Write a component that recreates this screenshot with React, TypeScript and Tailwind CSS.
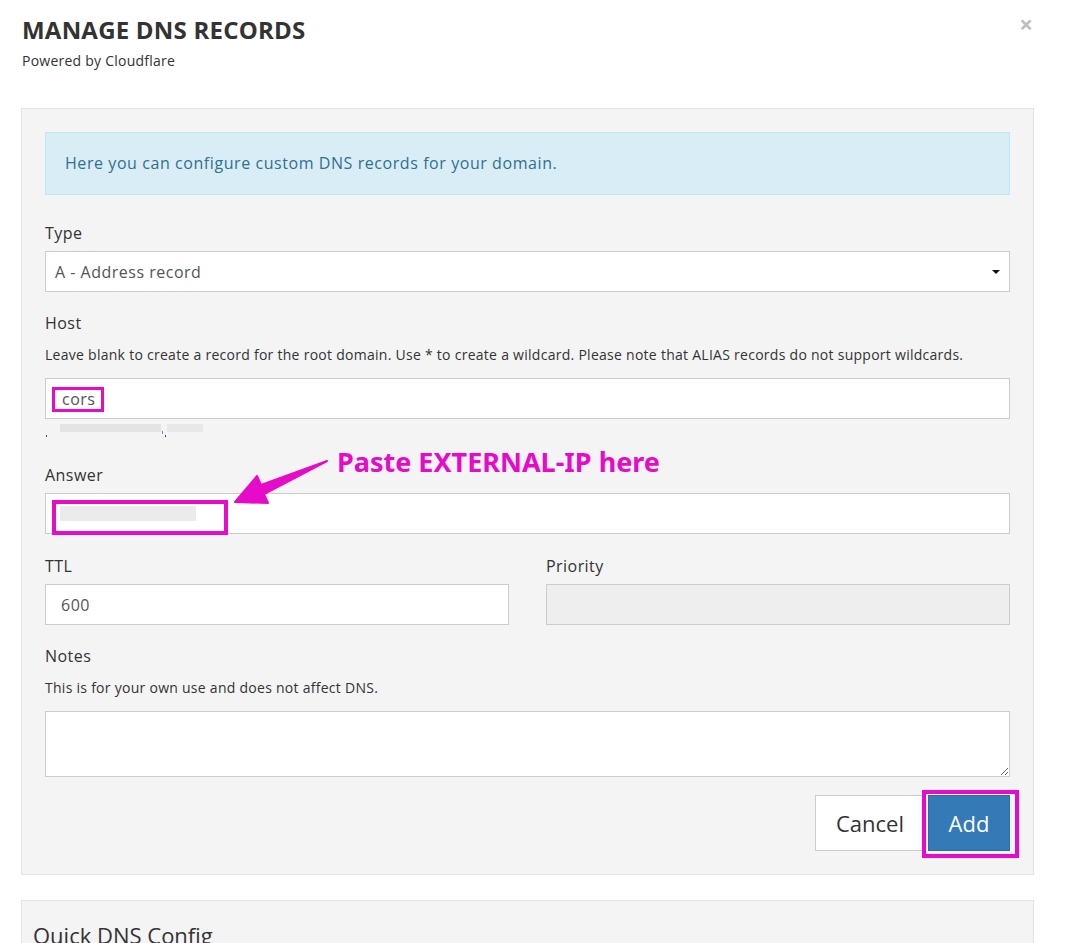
import React from "react";

const MAG = "#e50bc8";

function Label({ children, className = "" }: { children: React.ReactNode; className?: string }) {
  return <div className={`text-[16px] leading-[23px] tracking-[0.45px] text-[#333] ${className}`}>{children}</div>;
}

export default function App() {
  return (
    <div className="relative w-[1070px] h-[943px] overflow-hidden bg-white font-['Open_Sans',sans-serif] text-[#333] pl-[21px] pr-[36px]">
      {/* Header */}
      <div className="flex items-start justify-between pt-[17px]">
        <div className="pl-px">
          <h1 className="text-[24px] leading-[26px] font-bold tracking-[0.22px] text-[#333]">MANAGE DNS RECORDS</h1>
          <div className="mt-[8px] text-[14px] leading-[20px] tracking-[0.24px] text-[#333]">Powered by Cloudflare</div>
        </div>
        <div className="mt-[-5px] mr-px text-[24px] leading-[24px] font-bold text-[#bdbdbd]">×</div>
      </div>

      {/* Main panel */}
      <div className="mt-[37px] border border-[#e3e3e3] bg-[#f4f4f4] px-[23px] pt-[23px] pb-[23px]">
        <div className="border border-[#bce8f1] bg-[#d9edf7] text-[#31708f] text-[16px] leading-[23px] tracking-[0.57px] py-[19px] px-[19px]">
          Here you can configure custom DNS records for your domain.
        </div>

        <Label className="mt-[27px]">Type</Label>
        <div className="mt-[6px] h-[41px] border border-[#ccc] bg-white flex items-center justify-between pl-[9px] pr-[9px] text-[16px] tracking-[0.5px] text-[#555]">
          <span>A - Address record</span>
          <span className="w-0 h-0 border-l-[4px] border-r-[4px] border-t-[4px] border-l-transparent border-r-transparent border-t-[#111]" />
        </div>

        <Label className="mt-[20px]">Host</Label>
        <div className="mt-[10px] text-[14px] leading-[20px] tracking-[0.27px] text-[#333]">
          Leave blank to create a record for the root domain. Use * to create a wildcard. Please note that ALIAS records do not support wildcards.
        </div>
        <div className="relative mt-[13px] h-[41px] border border-[#ccc] bg-white flex items-center pl-[16px] text-[16px] tracking-[0.5px] text-[#555]">
          <span>cors</span>
          <div className="absolute left-[6px] top-[8px] w-[52px] h-[25px] border-[3px] border-[#e50bc8]" />
        </div>
        <div className="flex items-start h-[25px] pt-[5px]">
          <div className="ml-px mt-[11px] w-px h-[2px] bg-[#444]" />
          <div className="ml-[13px] w-[101px] h-[8px] bg-[#e4e4e4]" />
          <div className="ml-px mt-[7px] w-px h-[3px] bg-[#6b8fb8]" />
          <div className="ml-[2px] mt-[11px] w-px h-[2px] bg-[#444]" />
          <div className="ml-px w-[36px] h-[8px] bg-[#e8e8e8]" />
        </div>

        <Label className="mt-[20px]">Answer</Label>
        <div className="relative mt-[6px] h-[41px] border border-[#ccc] bg-white flex items-center pl-[14px]">
          <div className="w-[136px] h-[15px] bg-[#ebebeb]" />
          <div className="absolute left-[6px] top-[6px] w-[176px] h-[35px] border-[4px] border-[#e50bc8]" />
        </div>

        <div className="mt-[20px] grid grid-cols-2 gap-x-[37px]">
          <div>
            <Label className="mt-px">TTL</Label>
            <div className="mt-[6px] h-[41px] border border-[#ccc] bg-white flex items-center pl-[15px] text-[16px] tracking-[0.5px] text-[#555]">600</div>
          </div>
          <div>
            <Label className="mt-px">Priority</Label>
            <div className="mt-[6px] h-[41px] border border-[#ccc] bg-[#eeeeee]" />
          </div>
        </div>

        <Label className="mt-[20px]">Notes</Label>
        <div className="mt-[10px] text-[14px] leading-[20px] tracking-[0.27px] text-[#333]">This is for your own use and does not affect DNS.</div>
        <textarea className="mt-[13px] block w-full h-[66px] border border-[#ccc] bg-white resize-y outline-none" />

        <div className="mt-[18px] flex justify-end">
          <div className="w-[110px] h-[56px] border border-[#ccc] bg-white flex items-center justify-center text-[22px] text-[#333]">Cancel</div>
          <div className="relative ml-[3px] w-[82px] h-[56px] border border-[#2e6da4] bg-[#337ab7] flex items-center justify-center text-[22px] text-white">
            Add
            <div className="absolute left-[-7px] top-[-6px] right-[-10px] bottom-[-8px] border-[4px] border-[#e50bc8]" />
          </div>
        </div>
      </div>

      {/* Second panel */}
      <div className="mt-[25px] h-[200px] border border-[#e3e3e3] bg-[#f4f4f4] pl-[11px] pt-[19px]">
        <div className="text-[22px] leading-[30px] text-[#333]">Quick DNS Config</div>
      </div>

      {/* Annotation */}
      <svg className="absolute left-0 top-0 pointer-events-none" width="1070" height="943">
        <polygon
          points="327,461 261,485 257,476 235,502 268,503 264,494"
          fill={MAG}
          stroke={MAG}
          strokeWidth="2"
          strokeLinejoin="round"
        />
      </svg>
      <div className="absolute left-[337px] top-[448px] text-[27px] leading-[27px] font-bold font-['Noto_Sans',sans-serif] text-[#e50bc8] whitespace-nowrap">
        Paste EXTERNAL-IP here
      </div>
    </div>
  );
}
